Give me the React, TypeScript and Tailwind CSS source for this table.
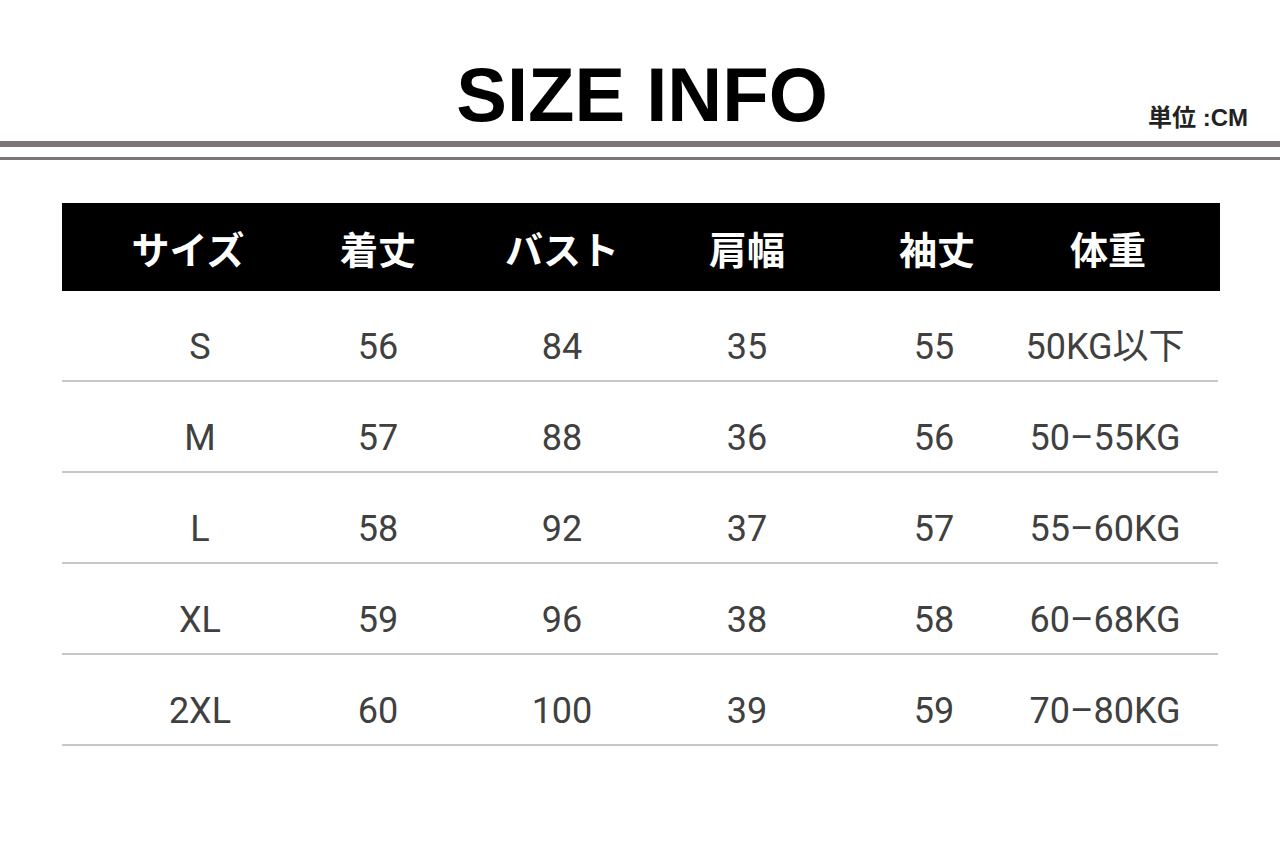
const headers = ["サイズ", "着丈", "バスト", "肩幅", "袖丈", "体重"];

const rows = [
  ["S", "56", "84", "35", "55", "50KG以下"],
  ["M", "57", "88", "36", "56", "50–55KG"],
  ["L", "58", "92", "37", "57", "55–60KG"],
  ["XL", "59", "96", "38", "58", "60–68KG"],
  ["2XL", "60", "100", "39", "59", "70–80KG"],
];

const grid = "grid grid-cols-[224px_184px_184px_186px_180px_198px]";
const cellPad = ["pl-[52px]", "", "", "", "pl-[8px]", "pr-[28px]"];

export default function App() {
  return (
    <div className="min-h-[841px] w-full bg-white font-['Liberation_Sans','Noto_Sans_CJK_JP',sans-serif]">
      <div className="grid grid-cols-[1fr_auto_1fr] pt-[57px]">
        <div />
        <div className="text-[76px] font-bold leading-none text-black pl-[4px]">SIZE INFO</div>
        <div className="self-end justify-self-end pr-[32px] text-[24px] font-bold leading-[30px] text-[#222] font-['Liberation_Sans','Noto_Sans_CJK_JP',sans-serif]">
          単位 :CM
        </div>
      </div>
      <div className="mt-[8px] h-[6px] w-full bg-[#7b7576]" />
      <div className="mt-[10px] h-[3px] w-full bg-[#7b7576]" />

      <div className="ml-[62px] mt-[43px] w-[1158px]">
        <div className={`${grid} h-[88px] items-center bg-black`}>
          {headers.map((h, i) => (
            <div
              key={h}
              className={`text-center text-[38px] font-bold text-white font-['Noto_Sans_CJK_JP',sans-serif] ${i === 0 ? "pl-[28px]" : ""} ${i === 4 ? "pl-[14px]" : ""} ${i === 5 ? "pr-[22px]" : ""}`}
            >
              {h}
            </div>
          ))}
        </div>
        <div className="w-[1156px]">
          {rows.map((r) => (
            <div key={r[0]} className={`${grid} h-[91px] items-center border-b-2 border-[#c8c8c8] pt-[22px]`}>
              {r.map((c, i) => (
                <div
                  key={i}
                  className={`whitespace-nowrap text-center text-[36px] leading-none text-[#404040] font-['Roboto','Noto_Sans_CJK_JP',sans-serif] ${cellPad[i]}`}
                >
                  {c}
                </div>
              ))}
            </div>
          ))}
        </div>
      </div>
    </div>
  );
}
